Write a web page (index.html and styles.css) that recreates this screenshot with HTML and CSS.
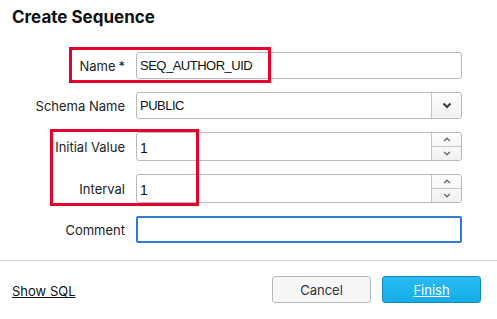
FILE: index.html
```html
<!DOCTYPE html>
<html>
<head>
<meta charset="utf-8">
<link rel="stylesheet" href="styles.css">
</head>
<body>
<div class="dialog">
  <h1 class="title">Create Sequence</h1>
  <div class="form">
    <div class="label">Name<span class="req">*</span></div>
    <div class="field"><span class="value caps">SEQ_AUTHOR_UID</span></div>

    <div class="label">Schema Name</div>
    <div class="field select">
      <span class="value caps">PUBLIC</span>
      <span class="btn-col">
        <svg width="10" height="7" viewBox="0 0 10 7"><path d="M1.5 1.5 L5 5 L8.5 1.5" fill="none" stroke="#3a3a3a" stroke-width="2"/></svg>
      </span>
    </div>

    <div class="label">Initial Value</div>
    <div class="field spin">
      <span class="value">1</span>
      <span class="btn-col spin-col">
        <span class="spin-btn"><svg width="8" height="5" viewBox="0 0 8 5"><path d="M1.2 4 L4 1.2 L6.8 4" fill="none" stroke="#666" stroke-width="1.3"/></svg></span>
        <span class="spin-btn"><svg width="8" height="5" viewBox="0 0 8 5"><path d="M1.2 1 L4 3.8 L6.8 1" fill="none" stroke="#666" stroke-width="1.3"/></svg></span>
      </span>
    </div>

    <div class="label">Interval</div>
    <div class="field spin">
      <span class="value">1</span>
      <span class="btn-col spin-col">
        <span class="spin-btn"><svg width="8" height="5" viewBox="0 0 8 5"><path d="M1.2 4 L4 1.2 L6.8 4" fill="none" stroke="#666" stroke-width="1.3"/></svg></span>
        <span class="spin-btn"><svg width="8" height="5" viewBox="0 0 8 5"><path d="M1.2 1 L4 3.8 L6.8 1" fill="none" stroke="#666" stroke-width="1.3"/></svg></span>
      </span>
    </div>

    <div class="label">Comment</div>
    <div class="field focus"></div>
  </div>
  <div class="separator"></div>
  <div class="footer">
    <a class="link">Show SQL</a>
    <div class="buttons">
      <button class="button cancel">Cancel</button>
      <button class="button finish">Finish</button>
    </div>
  </div>
  <div class="mark mark-name"></div>
  <div class="mark mark-values"></div>
</div>
</body>
</html>
```
FILE: styles.css
```css
* { box-sizing: border-box; }
html, body { margin: 0; padding: 0; background: #fff; }
body {
  font-family: Inter, "Noto Sans", "Liberation Sans", sans-serif;
  color: #222;
  font-size: 13px;
}
.dialog {
  position: relative;
  width: 497px;
  height: 319px;
  overflow: hidden;
}
.title {
  margin: 0;
  padding: 6px 12px 0;
  font-size: 17px;
  line-height: 22px;
  font-weight: 700;
  color: #111;
}
.form {
  display: grid;
  grid-template-columns: 125px 326px;
  column-gap: 11px;
  row-gap: 13px;
  margin-top: 24px;
  align-items: center;
}
.label {
  text-align: right;
  font-size: 13px;
  color: #222;
  white-space: nowrap;
}
.req { margin-left: 3px; }
.field {
  height: 27px;
  border: 1px solid #b9b9b9;
  border-radius: 3px;
  display: flex;
  align-items: center;
  background: #fff;
}
.field .value {
  flex: 1;
  padding-left: 3px;
  font-family: "Liberation Sans", Arial, sans-serif;
  font-size: 13.5px;
  color: #111;
}
.field .caps {
  font-size: 13px;
  letter-spacing: -0.5px;
}
.spin { height: 29px; }
.spin .value { font-size: 14px; padding-top: 2px; }
.btn-col {
  width: 30px;
  align-self: stretch;
  border-left: 1px solid #c4c4c4;
  background: linear-gradient(#fdfdfd, #f1f1f1);
  border-radius: 0 3px 3px 0;
  display: flex;
  align-items: center;
  justify-content: center;
}
.spin-col {
  flex-direction: column;
}
.spin-btn {
  flex: 1;
  width: 100%;
  display: flex;
  align-items: center;
  justify-content: center;
}
.spin-btn + .spin-btn { border-top: 1px solid #c8c8c8; }
.focus {
  border: 2px solid #2f7bd6;
  border-radius: 2px;
  height: 27px;
}
.separator {
  margin-top: 17px;
  height: 1px;
  background: #d3d3d3;
}
.footer {
  display: flex;
  align-items: center;
  justify-content: space-between;
  padding: 15px 16px 0 12px;
}
.link {
  font-size: 13px;
  color: #111;
  text-decoration: underline;
  padding-top: 3px;
}
.buttons {
  display: flex;
  gap: 11px;
}
.button {
  width: 99px;
  height: 27px;
  border-radius: 3px;
  font-family: Inter, "Noto Sans", "Liberation Sans", sans-serif;
  font-size: 13px;
  padding: 0;
}
.cancel {
  background: #f7f7f7;
  border: 1px solid #b8b8b8;
  color: #333;
}
.finish {
  background: linear-gradient(#27bbf1, #15ade9);
  border: 1px solid #1788bd;
  color: #fff;
  text-decoration: underline;
}
.mark {
  position: absolute;
  border: 3px solid #e6002a;
}
.mark-name { left: 69px; top: 47px; width: 202px; height: 36px; }
.mark-values { left: 50px; top: 129px; width: 149px; height: 77px; }
```
